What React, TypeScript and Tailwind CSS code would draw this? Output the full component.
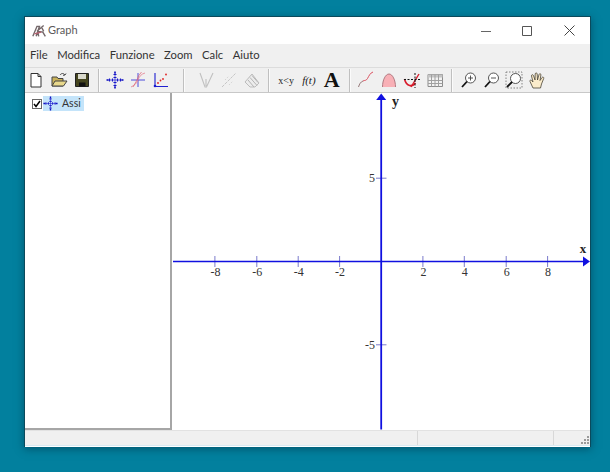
import React from "react";

const Sep = ({ className }: { className: string }) => (
  <div className={`w-[2px] h-[23px] border-l border-[#c0c0c0] bg-white/70 shrink-0 ${className}`} />
);

const Btn = ({ children }: { children: React.ReactNode }) => (
  <div className="w-[22.75px] h-[24px] flex items-center justify-center shrink-0">{children}</div>
);

const Ico = ({ children }: { children: React.ReactNode }) => (
  <svg width="18" height="18" viewBox="0 0 18 18" fill="none">{children}</svg>
);

const AxesGlyph = () => (
  <>
    <path d="M9 1.500v15M1.500 9h15" stroke="#3434d8" strokeWidth="0.800" />
    <path d="M7.500 3.500h3M7.500 6.500h3M7.500 11.500h3M7.500 14.500h3M3.500 7.500v3M6.500 7.500v3M11.500 7.500v3M14.500 7.500v3" stroke="#1a1ac8" strokeWidth="1.100" />
    <path d="M9 .500v2M9 15.500v2M.5 9h2M15.500 9h2" stroke="#1010c0" strokeWidth="1.600" />
  </>
);

const Toolbar = () => (
  <div className="flex items-center h-[25px] bg-[#f0f0f0] border-t border-[#dcdcdc] shrink-0">
    <Btn>
      <Ico>
        <path d="M4 2.500h7l3 3v10.500H4z" fill="#fff" stroke="#333" />
        <path d="M11 2.500v3h3" stroke="#333" />
      </Ico>
    </Btn>
    <Btn>
      <Ico>
        <path d="M2 15V6h5l1 1.500h5V15z" fill="#c9b25a" stroke="#444" />
        <path d="M2 15l3-5h12l-3.500 5z" fill="#e8d88c" stroke="#444" />
        <path d="M10 4c1.500-2 3.500-2 5 0M15 4l1-1.500M15 4l-2 .3" stroke="#444" />
      </Ico>
    </Btn>
    <Btn>
      <Ico>
        <path d="M2.500 2.500h13v13h-13z" fill="#45451f" stroke="#222" />
        <path d="M5 3h8v5H5z" fill="#d9d9cc" />
        <path d="M6 11.500h6.500V15.500H6z" fill="#111" />
      </Ico>
    </Btn>
    <Sep className="ml-[5px] mr-[3.500px]" />
    <Btn>
      <Ico>
        <AxesGlyph />
      </Ico>
    </Btn>
    <Btn>
      <Ico>
        <path d="M9 2v14M2 9h14" stroke="#3a3ad8" strokeWidth="0.900" />
        <path d="M2 16C6 14 8 12 9 9s3-6 7-7" stroke="#e88a9a" strokeWidth="0.900" />
        <path d="M4 16l4-7 1.500-4 3-4" stroke="#e06070" strokeWidth="0.700" />
      </Ico>
    </Btn>
    <Btn>
      <Ico>
        <path d="M3 2v13.500h13" stroke="#2020d0" strokeWidth="1.100" />
        <circle cx="6" cy="12" r="0.900" fill="#e02020" />
        <circle cx="8.500" cy="9.500" r="0.900" fill="#e02020" />
        <circle cx="11" cy="8" r="0.900" fill="#e02020" />
        <circle cx="14" cy="3.500" r="0.900" fill="#e02020" />
        <circle cx="3" cy="15" r="1.300" fill="#1a1ad0" />
      </Ico>
    </Btn>
    <Sep className="ml-[11px] mr-[10px]" />
    <Btn>
      <Ico>
        <path d="M3 2l5 14h1.500L16 2M9 15V8" stroke="#c0c0c0" strokeWidth="1.100" />
      </Ico>
    </Btn>
    <Btn>
      <Ico>
        <path d="M2 16L16 2" stroke="#c6c6c6" strokeWidth="1" strokeDasharray="3 1" />
        <path d="M5 9l4-4M9 14l4-4" stroke="#d4d4d4" strokeDasharray="1.500 1.500" />
      </Ico>
    </Btn>
    <Btn>
      <Ico>
        <path d="M2 11l7-8 7 9-4 4H7z" fill="#ececec" stroke="#bcbcbc" />
        <path d="M5 9l6 7M7 6.500l7 8M9 4.500l6 7" stroke="#b4b4b4" />
      </Ico>
    </Btn>
    <Sep className="ml-[5px] mr-[4.500px]" />
    <Btn>
      <span className="font-['Liberation_Serif',serif] text-[10px] text-[#222]">x&lt;y</span>
    </Btn>
    <Btn>
      <span className="font-['Liberation_Serif',serif] italic text-[11px] text-[#222]">f(t)</span>
    </Btn>
    <Btn>
      <span className="font-['Liberation_Serif',serif] font-bold text-[22px] leading-none text-[#111]">A</span>
    </Btn>
    <Sep className="ml-[5.500px] mr-[4.500px]" />
    <Btn>
      <Ico>
        <path d="M6 10c2-1 3 0 4.500-2.500S13 2 16 1" stroke="#d84050" strokeWidth="0.900" />
        <path d="M1.500 16c1-3 2-5 4.500-6" stroke="#8a6a6a" strokeWidth="0.900" />
      </Ico>
    </Btn>
    <Btn>
      <Ico>
        <path d="M2.500 16c0-7 3-13 6.500-13s6.500 6 6.500 13z" fill="#f8b0b6" />
        <path d="M2.500 16c0-7 3-13 6.500-13s6.500 6 6.500 13" stroke="#a87078" strokeWidth="0.900" />
      </Ico>
    </Btn>
    <Btn>
      <Ico>
        <path d="M1.500 8c2 8 8 8 11 4" stroke="#d81c2c" strokeWidth="1.600" />
        <path d="M8 16L16 3" stroke="#d81c2c" strokeWidth="1.400" />
        <path d="M1 8.500h16M12 2v15" stroke="#111" strokeWidth="1" strokeDasharray="2 1.500" />
      </Ico>
    </Btn>
    <Btn>
      <Ico>
        <path d="M2 3.500h14.500v12H2z" fill="#f2f2f2" stroke="#8c8c8c" />
        <path d="M2 3.500h14.500v3H2z" fill="#c4c4c4" />
        <path d="M2 9.500h14.500M2 12.500h14.500M5.500 3.500v12M9 3.500v12M12.500 3.500v12" stroke="#a0a0a0" />
      </Ico>
    </Btn>
    <Sep className="ml-[5px] mr-[4.500px]" />
    <Btn>
      <Ico>
        <circle cx="10.500" cy="7" r="5" fill="#fff" stroke="#444" strokeWidth="0.900" />
        <path d="M8 7h5M10.500 4.500v5" stroke="#444" strokeWidth="0.900" />
        <path d="M7 10.500L2 16" stroke="#111" strokeWidth="1.800" />
      </Ico>
    </Btn>
    <Btn>
      <Ico>
        <circle cx="10.500" cy="7" r="5" fill="#fff" stroke="#444" strokeWidth="0.900" />
        <path d="M8 7h5" stroke="#444" strokeWidth="0.900" />
        <path d="M7 10.500L2 16" stroke="#111" strokeWidth="1.800" />
      </Ico>
    </Btn>
    <Btn>
      <Ico>
        <path d="M1 1h16v16H1z" stroke="#777" strokeDasharray="1.500 1.500" strokeWidth="0.900" />
        <circle cx="10.500" cy="7.500" r="5" fill="#fff" stroke="#444" strokeWidth="0.900" />
        <path d="M7 11L2 16" stroke="#111" strokeWidth="1.800" />
      </Ico>
    </Btn>
    <Btn>
      <Ico>
        <path
          d="M5 17L2 10.500c-.6-1.300 1-2 1.800-.8L5 11 3.500 5c-.3-1.400 1.500-1.800 2-.5L7 9l.2-6c0-1.400 2-1.400 2 0L9.500 9l1.500-5.500c.4-1.300 2.200-.9 1.900.5L12 9.500l2-3c.8-1 2.200-.2 1.700 1L13.500 13l-1 4z"
          fill="#fbeccb"
          stroke="#4a4436"
          strokeWidth="0.800"
        />
      </Ico>
    </Btn>
  </div>
);

const ticksX = [
  { x: 215, l: "-8" },
  { x: 257, l: "-6" },
  { x: 298.5, l: "-4" },
  { x: 340, l: "-2" },
  { x: 423.5, l: "2" },
  { x: 465, l: "4" },
  { x: 507, l: "6" },
  { x: 548.5, l: "8" },
];

const Plot = () => (
  <svg width="419" height="337" viewBox="172 93 419 337" className="block">
    <rect x="172" y="93" width="419" height="337" fill="#fff" />
    {ticksX.map((t) => (
      <g key={t.l}>
        <line x1={t.x} x2={t.x} y1="256" y2="267" stroke="#7a7acc" strokeWidth="1" />
        <text
          x={t.x + 0.5}
          y="276"
          textAnchor="middle"
          fontFamily="'Liberation Serif', serif"
          fontSize="12"
          fill="#333"
        >
          {t.l}
        </text>
      </g>
    ))}
    <line x1="376.500" x2="387" y1="178" y2="178" stroke="#7a7acc" />
    <line x1="376.500" x2="387" y1="345" y2="345" stroke="#7a7acc" />
    <text x="375.500" y="182" textAnchor="end" fontFamily="'Liberation Serif', serif" fontSize="12" fill="#333">5</text>
    <text x="375.500" y="349" textAnchor="end" fontFamily="'Liberation Serif', serif" fontSize="12" fill="#333">-5</text>
    <line x1="173" x2="586" y1="261.500" y2="261.500" stroke="#1010e0" strokeWidth="1.400" />
    <line x1="381.700" x2="381.700" y1="98" y2="430" stroke="#1010e0" strokeWidth="1.800" />
    <path d="M591 261.500l-7-5v10z" fill="#1010e0" />
    <path d="M381.700 93l-5 6.500h10z" fill="#1010e0" />
    <text x="584" y="253" textAnchor="middle" fontFamily="'Liberation Serif', serif" fontWeight="700" fontSize="13" fill="#222">x</text>
    <text x="396" y="106" textAnchor="middle" fontFamily="'Liberation Serif', serif" fontWeight="700" fontSize="14" fill="#222">y</text>
  </svg>
);

export default function App() {
  return (
    <div className="w-[610px] h-[472px] bg-[#02809e] pt-[16px] pl-[24px] overflow-hidden font-['Lato',sans-serif]">
      <div className="w-[567px] h-[431px] flex flex-col bg-white border-t border-l border-r border-[#0b4a5c] shadow-[0_2px_8px_rgba(0,40,60,0.5)]">
        <div className="h-[27px] flex items-center bg-white shrink-0">
          <svg width="15" height="15" viewBox="0 0 18 18" fill="none" className="ml-[7px]">
            <path d="M1 16L6 4h3L5 16M6 10l8-7M8 16l-1-6 6 1 3 5M12 6l2 4" stroke="#74686a" strokeWidth="1.700" />
            <path d="M3 13l8-2" stroke="#b86070" strokeWidth="1.400" />
          </svg>
          <span className="ml-[1px] text-[11px] text-[#5a5a5a]">Graph</span>
          <div className="ml-auto flex items-center h-full">
            <svg width="10" height="10" viewBox="0 0 10 10" className="mr-[31px]">
              <path d="M0 5.500h10" stroke="#666" />
            </svg>
            <svg width="10" height="10" viewBox="0 0 10 10" className="mr-[32px]">
              <path d="M.5.500h9v9h-9z" stroke="#555" fill="none" />
            </svg>
            <svg width="11" height="11" viewBox="0 0 11 11" className="mr-[15px]">
              <path d="M.5.500l10 10M10.500.500l-10 10" stroke="#444" />
            </svg>
          </div>
        </div>
        <div className="h-[23px] flex items-center gap-[9.500px] pl-[5px] bg-[#f0f0f0] text-[11.250px] text-[#333] shrink-0">
          <span>File</span>
          <span>Modifica</span>
          <span>Funzione</span>
          <span>Zoom</span>
          <span>Calc</span>
          <span>Aiuto</span>
        </div>
        <Toolbar />
        <div className="h-[338px] flex border-t border-[#c8c8c8] shrink-0">
          <div className="w-[147px] h-full bg-white border-r-2 border-b-2 border-[#a6a6a6] pl-[7px] pt-[3px] shrink-0">
            <div className="flex items-center h-[15px]">
              <div className="w-[10px] h-[10px] border border-[#666] bg-white flex items-center justify-center">
                <svg width="8" height="8" viewBox="0 0 8 8" fill="none">
                  <path d="M1 4l2 2.500L7 1" stroke="#000" strokeWidth="1.500" />
                </svg>
              </div>
              <div className="flex items-center h-[15px] bg-[#c4e4fa] ml-[1px] pr-[3px]">
                <svg width="15" height="15" viewBox="0 0 18 18" fill="none">
                  <AxesGlyph />
                </svg>
                <span className="ml-[4px] text-[10.500px] text-[#333]">Assi</span>
              </div>
            </div>
          </div>
          <Plot />
        </div>
        <div className="h-[16px] flex bg-[#f0f0f0] border-t border-[#e2e2e2] border-b border-b-[#d8eaf2] text-[10px] shrink-0">
          <div className="w-[393px] border-r border-[#d8d8d8]" />
          <div className="w-[136px] border-r border-[#d8d8d8]" />
          <div className="flex-1 flex items-end justify-end">
            <svg width="10" height="10" viewBox="0 0 10 10">
              <path d="M7 1h2v2H7zM4 4h2v2H4zM7 4h2v2H7zM1 7h2v2H1zM4 7h2v2H4zM7 7h2v2H7z" fill="#9a9a9a" />
            </svg>
          </div>
        </div>
      </div>
    </div>
  );
}
